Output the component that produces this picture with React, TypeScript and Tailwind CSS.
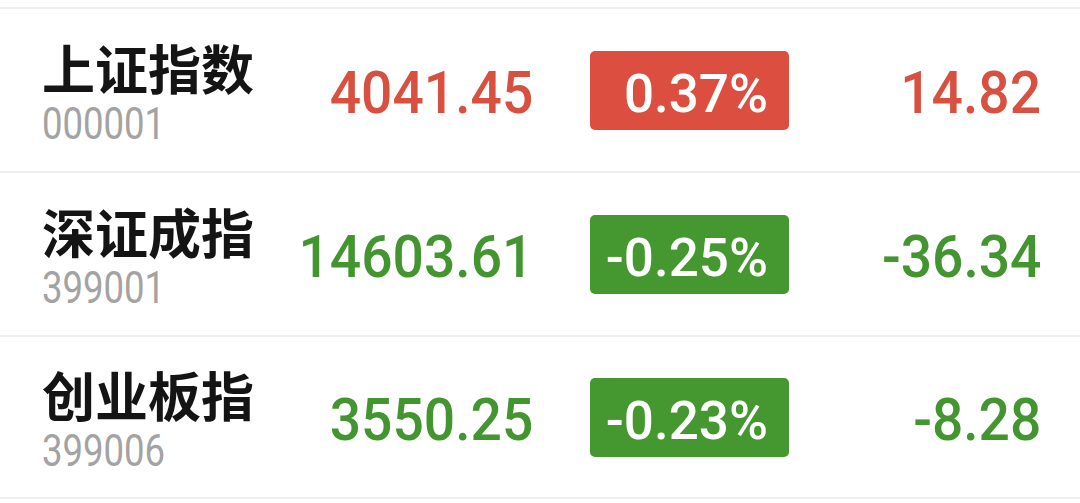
const rows = [
  { name: '上证指数', code: '000001', price: '4041.45', pct: '0.37%', chg: '14.82', up: true },
  { name: '深证成指', code: '399001', price: '14603.61', pct: '-0.25%', chg: '-36.34', up: false },
  { name: '创业板指', code: '399006', price: '3550.25', pct: '-0.23%', chg: '-8.28', up: false },
]

const num = "[font-family:Roboto,'Liberation_Sans',sans-serif]"

export default function App() {
  return (
    <div className="w-[1080px] h-[503px] bg-white pt-[7px] overflow-hidden">
      {rows.map((r) => (
        <div
          key={r.code}
          className="flex items-center h-[164px] border-t-2 border-[#eeeeee] last:border-b-2"
        >
          {/* name + code */}
          <div className="w-[280px] pl-[42px] flex flex-col pt-[2px]">
            <span className="text-[53px] leading-[60px] font-bold text-[#141414] [font-family:'Noto_Sans_CJK_SC',sans-serif]">
              {r.name}
            </span>
            <span
              className={`mt-[5px] inline-block origin-left scale-x-[0.83] text-[44px] leading-[44px] text-[#a3a3a3] ${num}`}
            >
              {r.code}
            </span>
          </div>

          {/* last price */}
          <div
            className={`w-[253px] flex justify-end pt-[6px] ${r.up ? 'text-[#d8503f]' : 'text-[#43962f]'}`}
          >
            <span className={`inline-block origin-right scale-x-[0.92] text-[60px] leading-[70px] font-medium ${num}`}>
              {r.price}
            </span>
          </div>

          {/* percent badge */}
          <div
            className={`ml-[57px] w-[199px] h-[79px] rounded-[5px] flex items-center justify-end pr-[21px] pt-[7px] text-white ${
              r.up ? 'bg-[#dc4f40]' : 'bg-[#45982f]'
            }`}
          >
            <span className={`text-[53px] leading-[60px] font-medium ${num}`}>{r.pct}</span>
          </div>

          {/* change */}
          <div
            className={`flex-1 flex justify-end pr-[39px] pt-[6px] ${r.up ? 'text-[#d8503f]' : 'text-[#43962f]'}`}
          >
            <span className={`inline-block origin-right scale-x-[0.92] text-[60px] leading-[70px] font-medium ${num}`}>
              {r.chg}
            </span>
          </div>
        </div>
      ))}
    </div>
  )
}
